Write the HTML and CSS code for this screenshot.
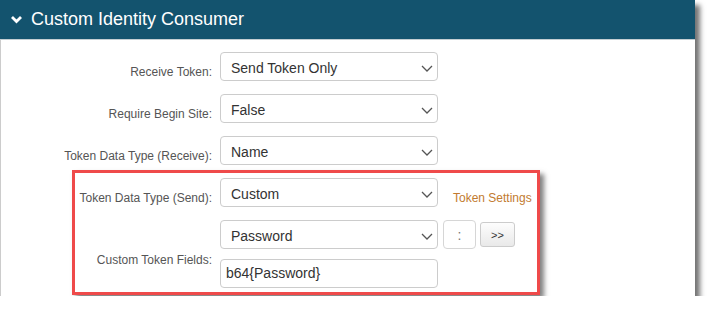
FILE: index.html
```html
<!DOCTYPE html>
<html>
<head>
    <title>Custom Identity Consumer</title>
    <link rel="stylesheet" href="styles.css">
</head>
<body>
    <div class="panel">
        <div class="panel-header">
            <svg class="toggle" width="13" height="9" viewBox="0 0 13 9">
                <polyline points="2,2 6.5,6.5 11,2" fill="none" stroke="#fff" stroke-width="2.8"/>
            </svg>
            <span>Custom Identity Consumer</span>
        </div>

        <div class="panel-body">
            <div class="row">
                <label class="label">Receive Token:</label>
                <div class="select"><span>Send Token Only</span><svg class="caret" width="12" height="7" viewBox="0 0 12 7"><polyline points="1,1 6,6 11,1" fill="none" stroke="#555" stroke-width="1.3"/></svg></div>
            </div>
            <div class="row">
                <label class="label">Require Begin Site:</label>
                <div class="select"><span>False</span><svg class="caret" width="12" height="7" viewBox="0 0 12 7"><polyline points="1,1 6,6 11,1" fill="none" stroke="#555" stroke-width="1.3"/></svg></div>
            </div>
            <div class="row">
                <label class="label">Token Data Type (Receive):</label>
                <div class="select"><span>Name</span><svg class="caret" width="12" height="7" viewBox="0 0 12 7"><polyline points="1,1 6,6 11,1" fill="none" stroke="#555" stroke-width="1.3"/></svg></div>
            </div>
            <div class="row">
                <label class="label">Token Data Type (Send):</label>
                <div class="select"><span>Custom</span><svg class="caret" width="12" height="7" viewBox="0 0 12 7"><polyline points="1,1 6,6 11,1" fill="none" stroke="#555" stroke-width="1.3"/></svg></div>
                <a class="link">Token Settings</a>
            </div>
            <div class="row group">
                <label class="label label-mid">Custom Token Fields:</label>
                <div class="stack">
                    <div class="inline">
                        <div class="select"><span>Password</span><svg class="caret" width="12" height="7" viewBox="0 0 12 7"><polyline points="1,1 6,6 11,1" fill="none" stroke="#555" stroke-width="1.3"/></svg></div>
                        <div class="sep">:</div>
                        <button class="add">&gt;&gt;</button>
                    </div>
                    <div class="text-input">b64{Password}</div>
                </div>
            </div>
        </div>

        <!-- highlight annotation -->
        <div class="highlight"></div>
    </div>
</body>
</html>
```

FILE: styles.css
```css
body {
    margin: 0;
    background: #fff;
    font-family: "Liberation Sans", Arial, sans-serif;
}
.panel {
    position: relative;
    width: 695px;
    height: 296px;
    background: #fff;
    box-shadow: 5px 5px 5px rgba(0, 0, 0, 0.55);
}
.panel-header {
    height: 39px;
    border-bottom: 1px solid #c3ced3;
    background: #13536e;
    color: #fff;
    font-size: 18px;
    display: flex;
    align-items: center;
    padding-left: 10px;
    gap: 8px;
}
.panel-body {
    height: 256px;
    border-left: 1px solid #ccc;
    padding-top: 12px;
    box-sizing: border-box;
}
.row {
    display: flex;
    align-items: flex-start;
    margin-bottom: 13px;
}
.group {
    margin-top: 1px;
}
.label {
    width: 211px;
    margin-right: 8px;
    margin-top: 12px;
    line-height: 16px;
    text-align: right;
    font-size: 12px;
    color: #555;
}
.label-mid {
    align-self: center;
    margin-top: 12px;
}
.select {
    width: 218px;
    height: 29px;
    box-sizing: border-box;
    border: 1px solid #ccc;
    border-radius: 4px;
    display: flex;
    align-items: center;
    justify-content: space-between;
    padding: 2px 4px 0 10px;
    font-size: 14px;
    color: #333;
}
.caret {
    margin-top: 2px;
}
.link {
    margin-left: 15px;
    margin-top: 12px;
    line-height: 16px;
    font-size: 12px;
    color: #c27b30;
}
.stack {
    display: flex;
    flex-direction: column;
    gap: 10px;
}
.inline {
    display: flex;
    align-items: center;
}
.sep {
    width: 33px;
    height: 29px;
    margin-left: 5px;
    box-sizing: border-box;
    border: 1px solid #d6d6d6;
    border-radius: 4px;
    display: flex;
    align-items: center;
    justify-content: center;
    font-size: 14px;
    color: #777;
}
.add {
    width: 35px;
    height: 25px;
    margin-left: 4px;
    padding: 0;
    border: 1px solid #ccc;
    border-radius: 3px;
    background: linear-gradient(#fdfdfd, #e9e9e9);
    font-family: "Liberation Sans", Arial, sans-serif;
    font-size: 11px;
    color: #333;
}
.text-input {
    width: 218px;
    height: 29px;
    box-sizing: border-box;
    border: 1px solid #ccc;
    border-radius: 4px;
    padding: 5px 5px 0;
    font-size: 14px;
    color: #333;
}
.highlight {
    position: absolute;
    left: 72px;
    top: 170px;
    width: 468px;
    height: 125px;
    box-sizing: border-box;
    border: 3px solid #ef4a4a;
    box-shadow: 4px 4px 5px rgba(0, 0, 0, 0.5);
    pointer-events: none;
}
```
